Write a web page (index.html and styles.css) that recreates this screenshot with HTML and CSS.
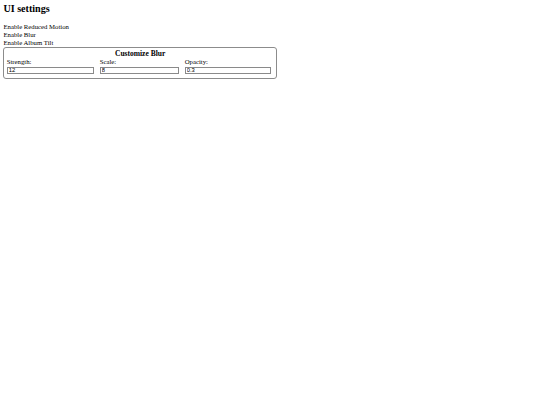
FILE: index.html
```html
<!DOCTYPE html>
<html lang="en">
<head>
<meta charset="utf-8">
<title>UI settings</title>
<link rel="stylesheet" href="styles.css">
</head>
<body>
<h2 class="title">UI settings</h2>
<div class="option">Enable Reduced Motion</div>
<div class="option">Enable Blur</div>
<div class="option">Enable Album Tilt</div>
<div class="panel">
  <div class="panel-title">Customize Blur</div>
  <div class="fields">
    <label class="field">
      <span class="field-label">Strength:</span>
      <input class="field-input" type="text" value="12">
    </label>
    <label class="field">
      <span class="field-label">Scale:</span>
      <input class="field-input" type="text" value="8">
    </label>
    <label class="field">
      <span class="field-label">Opacity:</span>
      <input class="field-input" type="text" value="0.3">
    </label>
  </div>
</div>
</body>
</html>
```

FILE: styles.css
```css
html {
  background: #ffffff;
}

body {
  margin: 3.4px;
  font-family: "Liberation Serif", "Times New Roman", serif;
  font-size: 6.75px;
  line-height: 7.8px;
  color: #000000;
}

.title {
  margin: 0 0 8.4px;
  font-size: 10.1px;
  line-height: 11.6px;
  font-weight: bold;
}

.option {
  height: 7.8px;
}

.panel {
  width: 273.5px;
  box-sizing: border-box;
  border: 1px solid #8c8c8c;
  border-radius: 3px;
  padding: 2px 2.3px 4px;
}

.panel-title {
  text-align: center;
  font-weight: bold;
  font-size: 7.5px;
  line-height: 8.6px;
}

.fields {
  display: grid;
  grid-template-columns: 87px 79px 86px;
  column-gap: 6px;
}

.field {
  display: flex;
  flex-direction: column;
}

.field-label {
  display: block;
  height: 7.8px;
}

.field-input {
  display: block;
  box-sizing: border-box;
  width: 100%;
  height: 6.6px;
  margin: 1px 0 0;
  padding: 0 1px;
  border: 1px solid #8a8a8a;
  border-radius: 0;
  font-family: "Liberation Sans", Arial, sans-serif;
  font-size: 5.8px;
  line-height: 4.6px;
  color: #000000;
  background: #ffffff;
}
```
